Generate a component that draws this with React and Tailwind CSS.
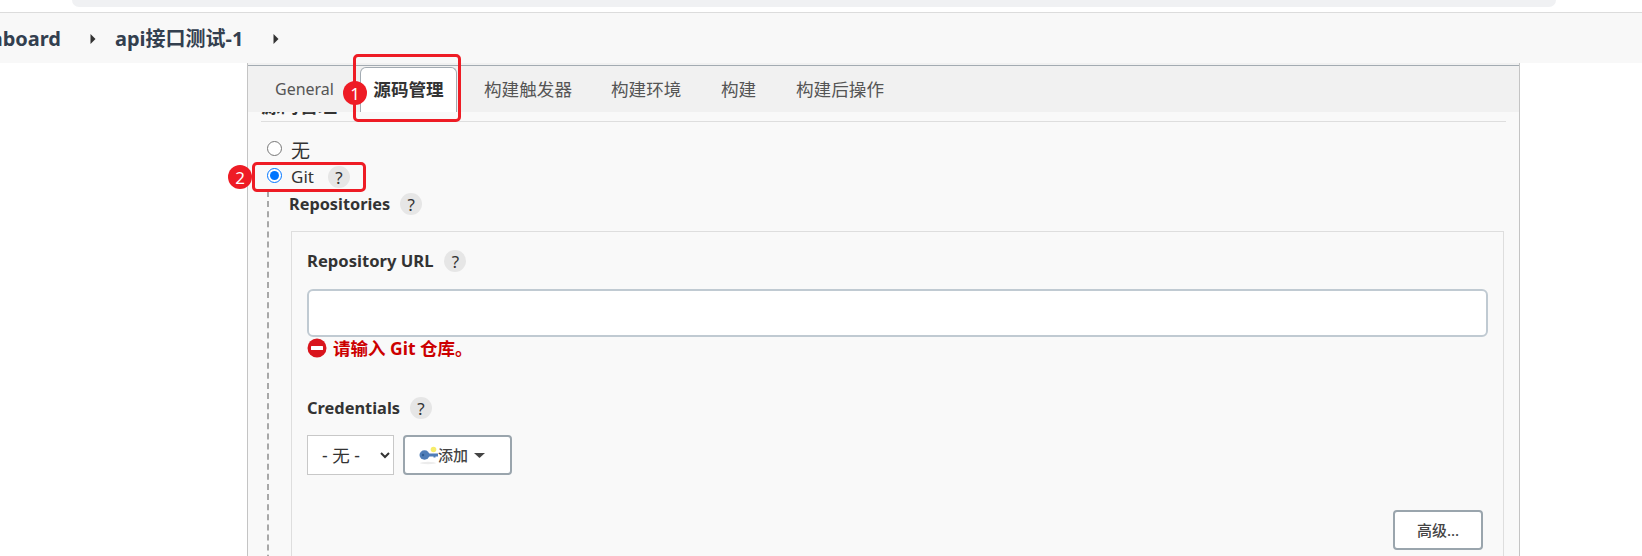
const font = 'font-["Noto_Sans","Noto_Sans_CJK_SC",sans-serif]';

function Help() {
	return (
		<span className="flex h-[22px] w-[22px] flex-none items-center justify-center rounded-full bg-[#e6e6e6] text-[17px] font-normal leading-none text-[#333]">
			?
		</span>
	);
}

function Caret() {
	return (
		<svg width="6" height="12" viewBox="0 0 6 12" className="flex-none">
			<path d="M0.5 1L5.5 6L0.5 11Z" fill="#333" />
		</svg>
	);
}

function KeyIcon() {
	return (
		<svg width="20" height="20" viewBox="0 0 20 20" className="flex-none">
			<ellipse cx="9" cy="18" rx="8" ry="1.2" fill="#ececec" />
			<ellipse cx="5.5" cy="10" rx="5" ry="4.7" fill="#4f7db8" />
			<circle cx="4" cy="10" r="1.2" fill="#2f5d94" />
			<path d="M9 8.5H19V11.5H16.5V12.5H14.5V11.5H9Z" fill="#4f7db8" />
			<circle cx="14.5" cy="4.5" r="2.8" fill="#f6ec6a" />
		</svg>
	);
}

function Badge({ n, className }) {
	return (
		<span className={`absolute flex h-[24px] w-[24px] items-center justify-center rounded-full bg-[#ee1c25] text-[17px] leading-none text-white ${className}`}>
			{n}
		</span>
	);
}

const tabs = ['构建触发器', '构建环境', '构建', '构建后操作'];

export default function App() {
	return (
		<div className={`relative h-[556px] w-[1642px] overflow-hidden bg-white ${font}`}>
			{/* Browser address bar remnant */}
			<div className="h-[12px] pl-[72px]">
				<div className="h-[7px] w-[1484px] rounded-b-[18px] bg-[#f0f1f3]" />
			</div>

			{/* Breadcrumb */}
			<div className="flex h-[51px] items-center border-t border-[#dcdcdc] bg-[#f8f8f8] pt-[2px] text-[20px] font-bold text-[#333f4f]">
				<span className="ml-[-47px] w-[137px] whitespace-nowrap">Dashboard</span>
				<Caret />
				<span className="ml-[19px] w-[158px] whitespace-nowrap">api接口测试-1</span>
				<Caret />
			</div>

			{/* Config panel */}
			<div className="ml-[247px] h-[493px] w-[1273px] overflow-hidden border-x border-[#c4c4c4] bg-[#f9f9f9]">
				<div className="h-[2px] bg-[#f1f1f1]" />
				<div className="flex h-[47px] items-end border-t border-[#a3abb2] bg-[#f1f1f1] text-[17.6px] text-[#555]">
					<div className="flex h-[44px] w-[112px] items-center pl-[27px] pb-[2px] text-[16px]">General</div>
					<div className="flex h-[45px] w-[97px] items-center justify-center rounded-t-[6px] border-x border-t border-[#a3abb2] bg-white pb-[2px] font-bold text-[#333]">
						源码管理
					</div>
					{tabs.map((tab, i) => (
						<div
							key={tab}
							className={`flex h-[44px] items-center pb-[2px] whitespace-nowrap ${i === 0 ? 'ml-[27px] w-[127px]' : i === 1 ? 'w-[110px]' : i === 2 ? 'w-[75px]' : ''}`}
						>
							{tab}
						</div>
					))}
				</div>

				{/* Source management section */}
				<div className="mx-[13px] h-[10px] w-[1245px] overflow-hidden border-b border-[#dedede]">
					<div className="mt-[-18px] text-[19px] font-bold leading-[24px] text-[#333]">源码管理</div>
				</div>

				<div className="mt-[17px] flex h-[24px] items-center gap-[9px] pl-[19px] text-[19px] text-[#333]">
					<input type="radio" name="scm" readOnly className="mb-[5px] h-[15px] w-[15px]" />
					<span>无</span>
				</div>
				<div className="flex h-[28px] items-center gap-[9px] pl-[19px] text-[17px] text-[#333]">
					<input type="radio" name="scm" defaultChecked className="mb-[4px] h-[15px] w-[15px]" />
					<span>Git</span>
					<span className="ml-[5px]"><Help /></span>
				</div>

				<div className="ml-[19px] h-[400px] border-l-2 border-dashed border-[#a8a8a8] pl-[22px]">
					<div className="ml-[-2px] flex h-[26px] items-center gap-[10px] text-[16.3px] font-bold text-[#333]">
						Repositories
						<Help />
					</div>
					<div className="mt-[14px] h-[360px] w-[1213px] border border-[#dedede] pl-[15px] pt-[17px]">
						<div className="flex h-[24px] items-center gap-[11px] text-[16.6px] font-bold text-[#333]">
							Repository URL
							<Help />
						</div>
						<input className="mt-[16px] block h-[48px] w-[1181px] rounded-[6px] border-2 border-[#c0cad2] bg-white" />
						<div className="flex h-[22px] items-center gap-[6px] text-[17.5px] font-bold text-[#cc0000]">
							<svg width="20" height="20" viewBox="0 0 20 20" className="flex-none">
								<circle cx="10" cy="10" r="9.5" fill="#d9141c" />
								<rect x="4" y="8" width="12" height="4" rx="0.5" fill="#fff" />
							</svg>
							请输入 Git 仓库。
						</div>
						<div className="mt-[37px] flex h-[24px] items-center gap-[10px] text-[16.4px] font-bold text-[#333]">
							Credentials
							<Help />
						</div>
						<div className="mt-[15px] flex gap-[9px]">
							<select className="h-[40px] w-[87px] border border-[#c8c8c8] bg-white pl-[10px] text-[17.5px] text-[#333]">
								<option>- 无 -</option>
							</select>
							<button className="flex h-[40px] w-[109px] items-center rounded-[4px] border-2 border-[#9aa5ad] bg-white pl-[14px] text-[15px] font-medium text-[#444]">
								<KeyIcon />
								<span className="ml-[-1px]">添加</span>
								<svg width="11" height="5" viewBox="0 0 11 5" className="ml-[6px] flex-none">
									<path d="M0 0H11L5.5 5Z" fill="#444" />
								</svg>
							</button>
						</div>
						<div className="mt-[35px] flex justify-end pr-[16px]">
							<button className="mr-[4px] flex h-[40px] w-[90px] items-center justify-center rounded-[4px] border-2 border-[#9aa5ad] bg-white text-[15px] font-medium text-[#444]">
								高级...
							</button>
						</div>
					</div>
				</div>
			</div>

			{/* Red annotations drawn over the screenshot */}
			<div className="absolute left-[353px] top-[54px] h-[68px] w-[108px] rounded-[5px] border-[3px] border-[#ee1c25]" />
			<Badge n="1" className="left-[343px] top-[81px]" />
			<div className="absolute left-[252px] top-[162px] h-[30px] w-[114px] rounded-[5px] border-[3px] border-[#ee1c25]" />
			<Badge n="2" className="left-[228px] top-[165px]" />
		</div>
	);
}
